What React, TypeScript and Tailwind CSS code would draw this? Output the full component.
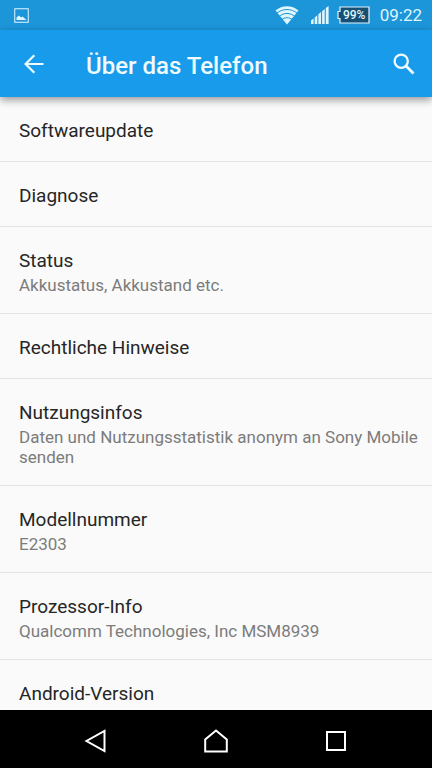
import React from "react";

type Item = {
  title: string;
  summary?: string;
};

const items: Item[] = [
  { title: "Softwareupdate" },
  { title: "Diagnose" },
  { title: "Status", summary: "Akkustatus, Akkustand etc." },
  { title: "Rechtliche Hinweise" },
  {
    title: "Nutzungsinfos",
    summary: "Daten und Nutzungsstatistik anonym an Sony Mobile senden",
  },
  { title: "Modellnummer", summary: "E2303" },
  { title: "Prozessor-Info", summary: "Qualcomm Technologies, Inc MSM8939" },
  { title: "Android-Version" },
];

const StatusBar: React.FC = () => {
  return (
    <div className="flex h-[30px] shrink-0 items-center bg-[#1c95d9] pr-2.5 pl-3.5 text-[#dff6ff]">
      {/* Screenshot notification */}
      <svg width="15" height="15" viewBox="0 0 15 15" fill="none">
        <rect x="0.75" y="0.75" width="13.5" height="13.5" stroke="currentColor" strokeWidth="1" />
        <path d="M2.5 12V9.5L5 7.5L7 9.5L8.5 8.5L12.5 12Z" fill="currentColor" />
      </svg>

      <div className="ml-auto flex items-center">
        {/* Wi-Fi */}
        <svg width="24" height="20" viewBox="0 0 24 20" fill="none">
          <path d="M0.5 5.5C7 -0.3 17 -0.3 23.5 5.5L12 19.5Z" fill="currentColor" />
          <path
            d="M1.5 8.4C7.5 3.2 16.5 3.2 22.5 8.4M4 11.6C8.6 7.4 15.4 7.4 20 11.6M6.6 14.8C9.8 12 14.2 12 17.4 14.8"
            stroke="#1c95d9"
            strokeWidth="1"
          />
        </svg>
        {/* Signal */}
        <svg className="ml-3" width="18" height="18" viewBox="0 0 18 18" fill="currentColor">
          <path d="M0 14.5L2.6 12.5V18H0ZM3.7 11.5L6.3 9.3V18H3.7ZM7.4 8.3L10 6.1V18H7.4ZM11.1 5.2L13.7 3V18H11.1ZM14.8 2.1L17.6 0V18H14.8Z" />
        </svg>
        {/* Battery */}
        <div className="relative ml-2 h-[18px] w-[33px]">
          <svg width="33" height="18" viewBox="0 0 33 18" fill="none">
            <path d="M3 1H32V17H3V12.5H1V5.5H3Z" fill="#174f72" stroke="currentColor" strokeWidth="1.2" />
          </svg>
          <span className="absolute inset-0 pl-0.5 text-center text-[12px] leading-[18px] font-medium">
            99%
          </span>
        </div>
        <span className="ml-2.5 text-[17px] leading-5">09:22</span>
      </div>
    </div>
  );
};

const AppBar: React.FC = () => {
  return (
    <header className="relative z-10 flex h-[67px] shrink-0 items-center bg-[#179bea] px-4 text-[#effbff] shadow-[0_3px_8px_rgba(0,0,0,0.4)]">
      <button aria-label="Zurück" className="flex size-9 items-center justify-center">
        <svg width="20" height="20" viewBox="0 0 20 20" fill="none" stroke="currentColor" strokeWidth="2.2">
          <path d="M19.5 10H2M10.3 1.3L1.6 10L10.3 18.7" />
        </svg>
      </button>
      <h1 className="ml-[34px] pt-1 text-[24px] leading-7 font-medium">Über das Telefon</h1>
      <button aria-label="Suchen" className="-mr-1.5 ml-auto flex size-9 items-center justify-center">
        <svg width="22" height="22" viewBox="0 0 22 22" fill="none" stroke="currentColor">
          <circle cx="8.2" cy="8.2" r="6.6" strokeWidth="2.3" />
          <path d="M13 13L20.5 20.5" strokeWidth="2.8" />
        </svg>
      </button>
    </header>
  );
};

const NavBar: React.FC = () => {
  return (
    <nav className="flex h-[58px] shrink-0 items-center justify-center gap-[72px] bg-black pt-1 text-white">
      <button aria-label="Zurück" className="flex size-12 items-center justify-center">
        <svg width="24" height="24" viewBox="0 0 24 24" fill="none" stroke="currentColor" strokeWidth="2">
          <path d="M20.5 2V22L2.5 12Z" />
        </svg>
      </button>
      <button aria-label="Startseite" className="flex size-12 items-center justify-center">
        <svg width="24" height="24" viewBox="0 0 24 24" fill="none" stroke="currentColor" strokeWidth="2">
          <path d="M1.2 22.5V10.5L12 1.5L22.8 10.5V22.5Z" />
        </svg>
      </button>
      <button aria-label="Letzte Apps" className="flex size-12 items-center justify-center">
        <svg width="20" height="20" viewBox="0 0 20 20" fill="none" stroke="currentColor" strokeWidth="2">
          <rect x="1" y="1" width="18" height="18" />
        </svg>
      </button>
    </nav>
  );
};

const App: React.FC = () => {
  return (
    <div className="flex h-screen flex-col overflow-hidden bg-[#fafafa] font-[Roboto,sans-serif]">
      <StatusBar />
      <AppBar />

      {/* Settings list */}
      <main className="min-h-0 flex-1 overflow-hidden">
        <ul>
          {items.map((item) => (
            <li key={item.title} className="border-b border-[#e4e4e4]">
              <button className="block w-full pt-[22px] pr-2 pb-[18px] pl-[19px] text-left">
                <span className="block text-[19px] leading-6 text-[#262626]">{item.title}</span>
                {item.summary && (
                  <span className="mt-0.5 block text-[17px] leading-5 text-[#7c7c7c]">
                    {item.summary}
                  </span>
                )}
              </button>
            </li>
          ))}
        </ul>
      </main>

      <NavBar />
    </div>
  );
};

export default App;
